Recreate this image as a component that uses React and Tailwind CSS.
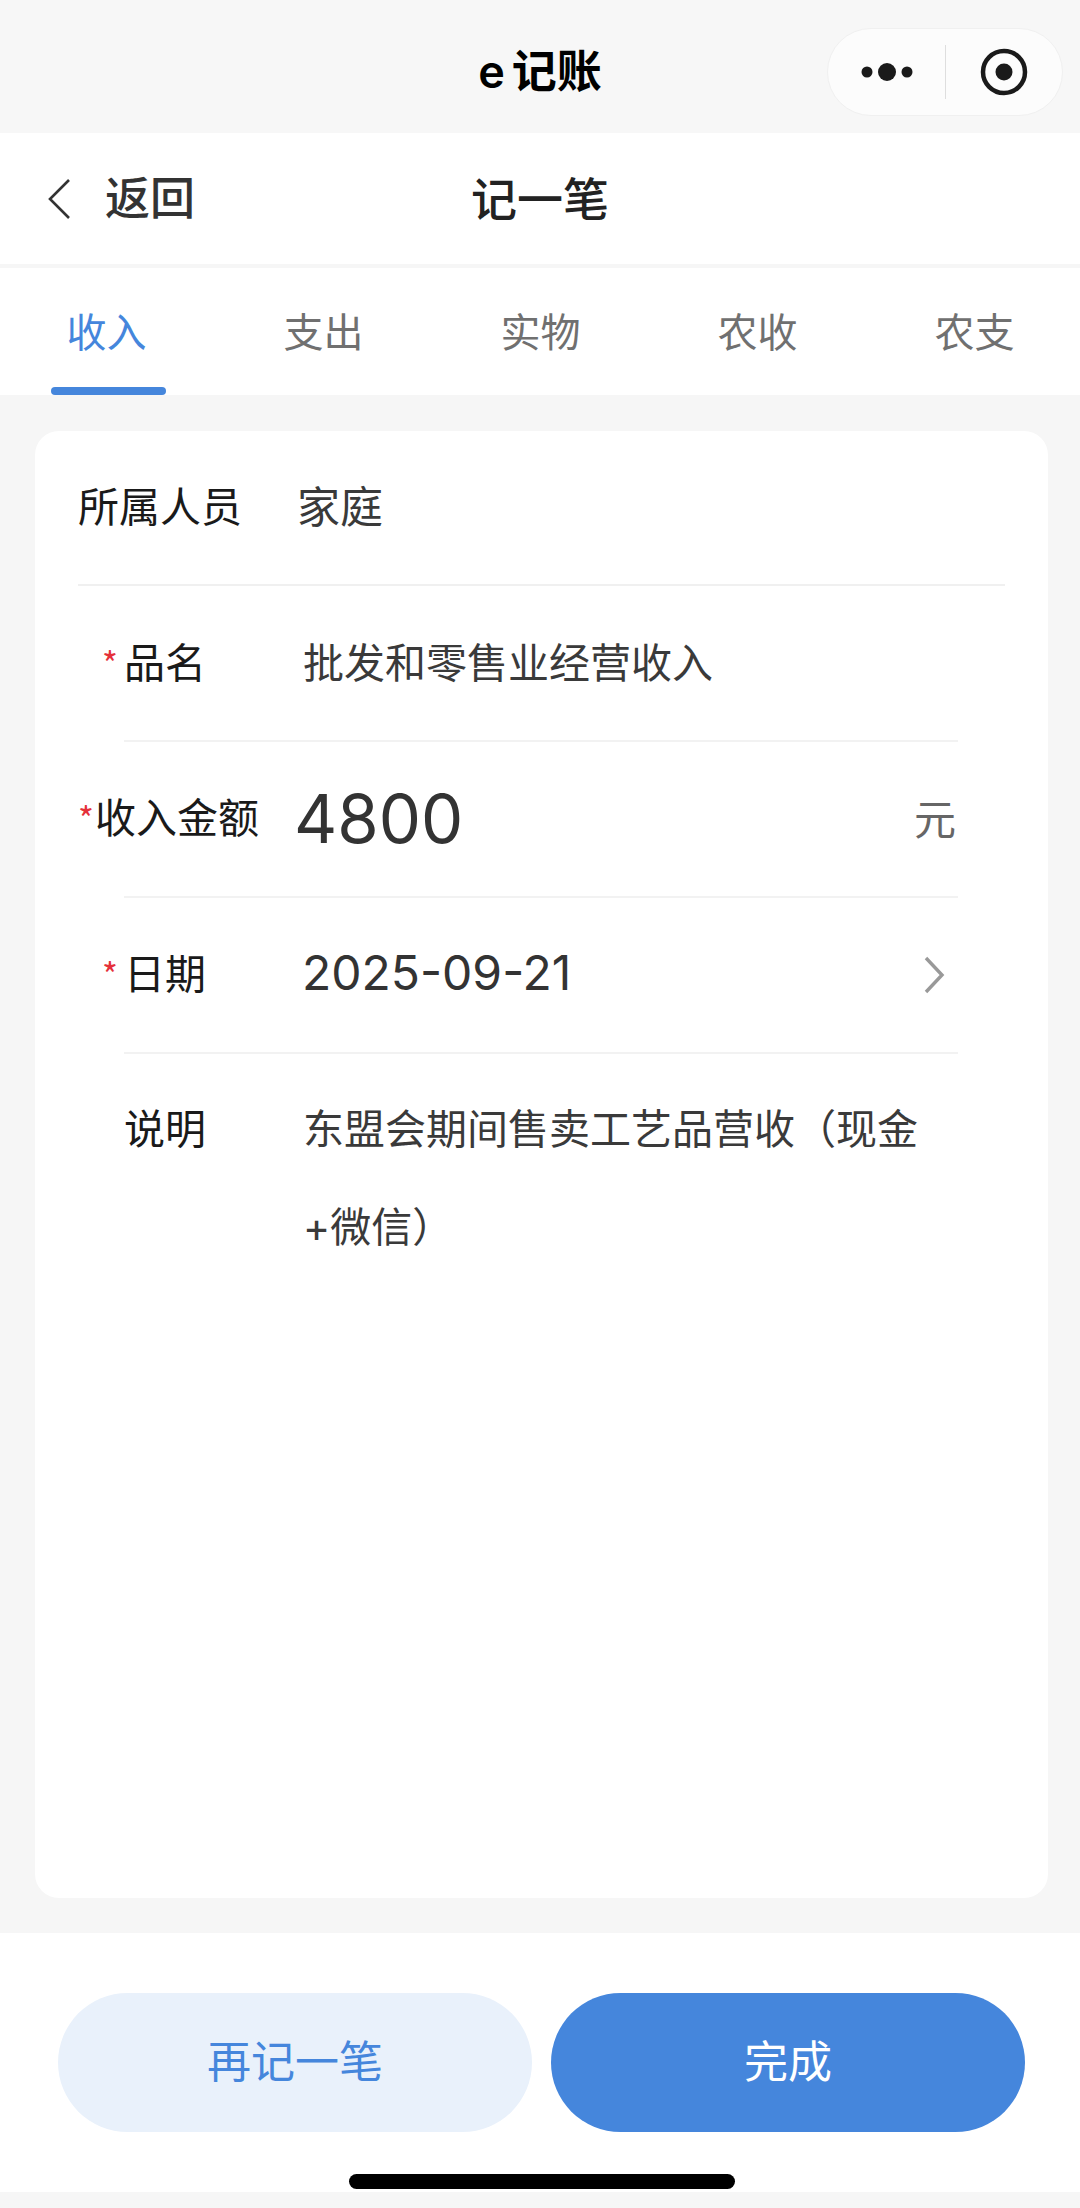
import React from "react";

const FONT = "font-['Inter','Noto_Sans_CJK_SC','Noto_Sans',sans-serif]";

function Star({ width }) {
  return <span className={"shrink-0 text-[34px] leading-none text-[#e5303a] font-['Noto_Sans_CJK_SC'] " + width}>*</span>;
}

function TopBar() {
  return (
    <div className="relative h-[133px] bg-[#f7f7f7] flex items-center justify-center shrink-0">
      <span className="text-[45px] font-bold text-black leading-none pt-[10px] flex items-center">
        <span className="mr-[7px] font-semibold">e</span>记账
      </span>
      <div className="absolute right-[17px] top-[28px] w-[236px] h-[88px] rounded-full bg-[#fcfcfc] border border-[#f0f0f0] flex items-center">
        <div className="w-[117px] h-full flex items-center justify-center pl-[2px]">
          <svg width="54" height="20" viewBox="0 0 54 20">
            <circle cx="6" cy="10" r="5.5" fill="#1a1a1a" />
            <circle cx="26" cy="10" r="9" fill="#1a1a1a" />
            <circle cx="46" cy="10" r="5.5" fill="#1a1a1a" />
          </svg>
        </div>
        <div className="w-px h-[54px] bg-[#dedede]" />
        <div className="flex-1 flex items-center justify-center">
          <svg width="48" height="48" viewBox="0 0 48 48">
            <circle cx="24" cy="24" r="21" fill="none" stroke="#1a1a1a" strokeWidth="4.5" />
            <circle cx="24" cy="24" r="8.5" fill="#1a1a1a" />
          </svg>
        </div>
      </div>
    </div>
  );
}

function NavBar() {
  return (
    <div className="relative h-[131px] bg-white flex items-center shrink-0">
      <svg className="ml-[46px]" width="26" height="44" viewBox="0 0 26 44">
        <path d="M23 3 L4 22 L23 41" fill="none" stroke="#333" strokeWidth="2.6" />
      </svg>
      <span className="ml-[33px] text-[45px] font-medium text-[#333] leading-none">返回</span>
      <span className="absolute left-0 right-0 text-center text-[46px] font-medium text-[#222] leading-none">记一笔</span>
    </div>
  );
}

function Tabs() {
  const tabs = ["收入", "支出", "实物", "农收", "农支"];
  return (
    <div className="h-[127px] mt-[4px] bg-white flex overflow-hidden shrink-0">
      <div className="flex -ml-[2px]">
        {tabs.map((t, i) => (
          <div
            key={t}
            className={
              "relative w-[217px] shrink-0 flex justify-center pt-[45px] text-[40px] leading-none " +
              (i === 0 ? "text-[#4586dc]" : "text-[#707070]")
            }
          >
            {t}
            {i === 0 && <div className="absolute left-[53px] bottom-0 w-[115px] h-[8px] rounded-full bg-[#4586dc]" />}
          </div>
        ))}
      </div>
    </div>
  );
}

function Row({ children }) {
  return (
    <div className="flex h-[156px] items-center ml-[89px] mr-[90px] border-b-2 border-[#f2f2f2]">
      {children}
    </div>
  );
}

function Card() {
  return (
    <div className="flex-1 ml-[35px] mr-[32px] mt-[36px] mb-[35px] rounded-[24px] bg-white">
      <div className="flex items-center h-[155px] mx-[43px] border-b-2 border-[#f0f0f0]">
        <span className="w-[219px] text-[41px] text-[#1a1a1a] leading-none">所属人员</span>
        <span className="text-[43px] text-[#3a3a3a] leading-none">家庭</span>
      </div>

      <Row>
        <div className="flex items-center w-[201px] -ml-[22px]">
          <Star width="w-[22px]" />
          <span className="text-[41px] text-[#1a1a1a] leading-none">品名</span>
        </div>
        <span className="text-[41px] text-[#3a3a3a] leading-none">批发和零售业经营收入</span>
      </Row>

      <Row>
        <div className="flex items-center w-[216px] -ml-[46px] pb-[2px]">
          <Star width="w-[17px]" />
          <span className="text-[41px] text-[#1a1a1a] leading-none whitespace-nowrap">收入金额</span>
        </div>
        <span className="flex-1 text-[67px] text-[#333] leading-none pb-[2px]">4800</span>
        <span className="mr-[2px] text-[42px] text-[#666] leading-none pt-[2px]">元</span>
      </Row>

      <Row>
        <div className="flex items-center w-[200px] -ml-[22px] pb-[2px]">
          <Star width="w-[22px]" />
          <span className="text-[41px] text-[#1a1a1a] leading-none">日期</span>
        </div>
        <span className="flex-1 text-[48px] text-[#333] leading-none pb-[4px]">2025-09-21</span>
        <svg className="mr-[12px]" width="24" height="40" viewBox="0 0 24 40">
          <path d="M4 3 L20 20 L4 37" fill="none" stroke="#999" strokeWidth="3.4" />
        </svg>
      </Row>

      <div className="flex ml-[89px] mr-[60px] pt-[26px] text-[41px] leading-[98px]">
        <span className="w-[179px] shrink-0 text-[#1a1a1a]">说明</span>
        <p className="text-[#3a3a3a]">东盟会期间售卖工艺品营收（现金<br />+微信）</p>
      </div>
    </div>
  );
}

function Footer() {
  return (
    <div className="h-[259px] bg-white shrink-0 relative">
      <div className="flex gap-[19px] pl-[58px] pr-[55px] pt-[60px]">
        <button className="flex-1 h-[139px] rounded-full bg-[#e9f1fb] text-[#4586dc] text-[44px] pb-[1px]">再记一笔</button>
        <button className="flex-1 h-[139px] rounded-full bg-[#4586dc] text-white text-[44px] pb-[1px]">完成</button>
      </div>
      <div className="absolute left-[349px] top-[241px] w-[386px] h-[15px] rounded-full bg-black" />
    </div>
  );
}

export default function App() {
  return (
    <div className={"h-[2208px] w-[1080px] bg-[#f6f6f6] flex flex-col overflow-hidden " + FONT}>
      <TopBar />
      <NavBar />
      <Tabs />
      <Card />
      <Footer />
      <div className="h-[16px] shrink-0" />
    </div>
  );
}
